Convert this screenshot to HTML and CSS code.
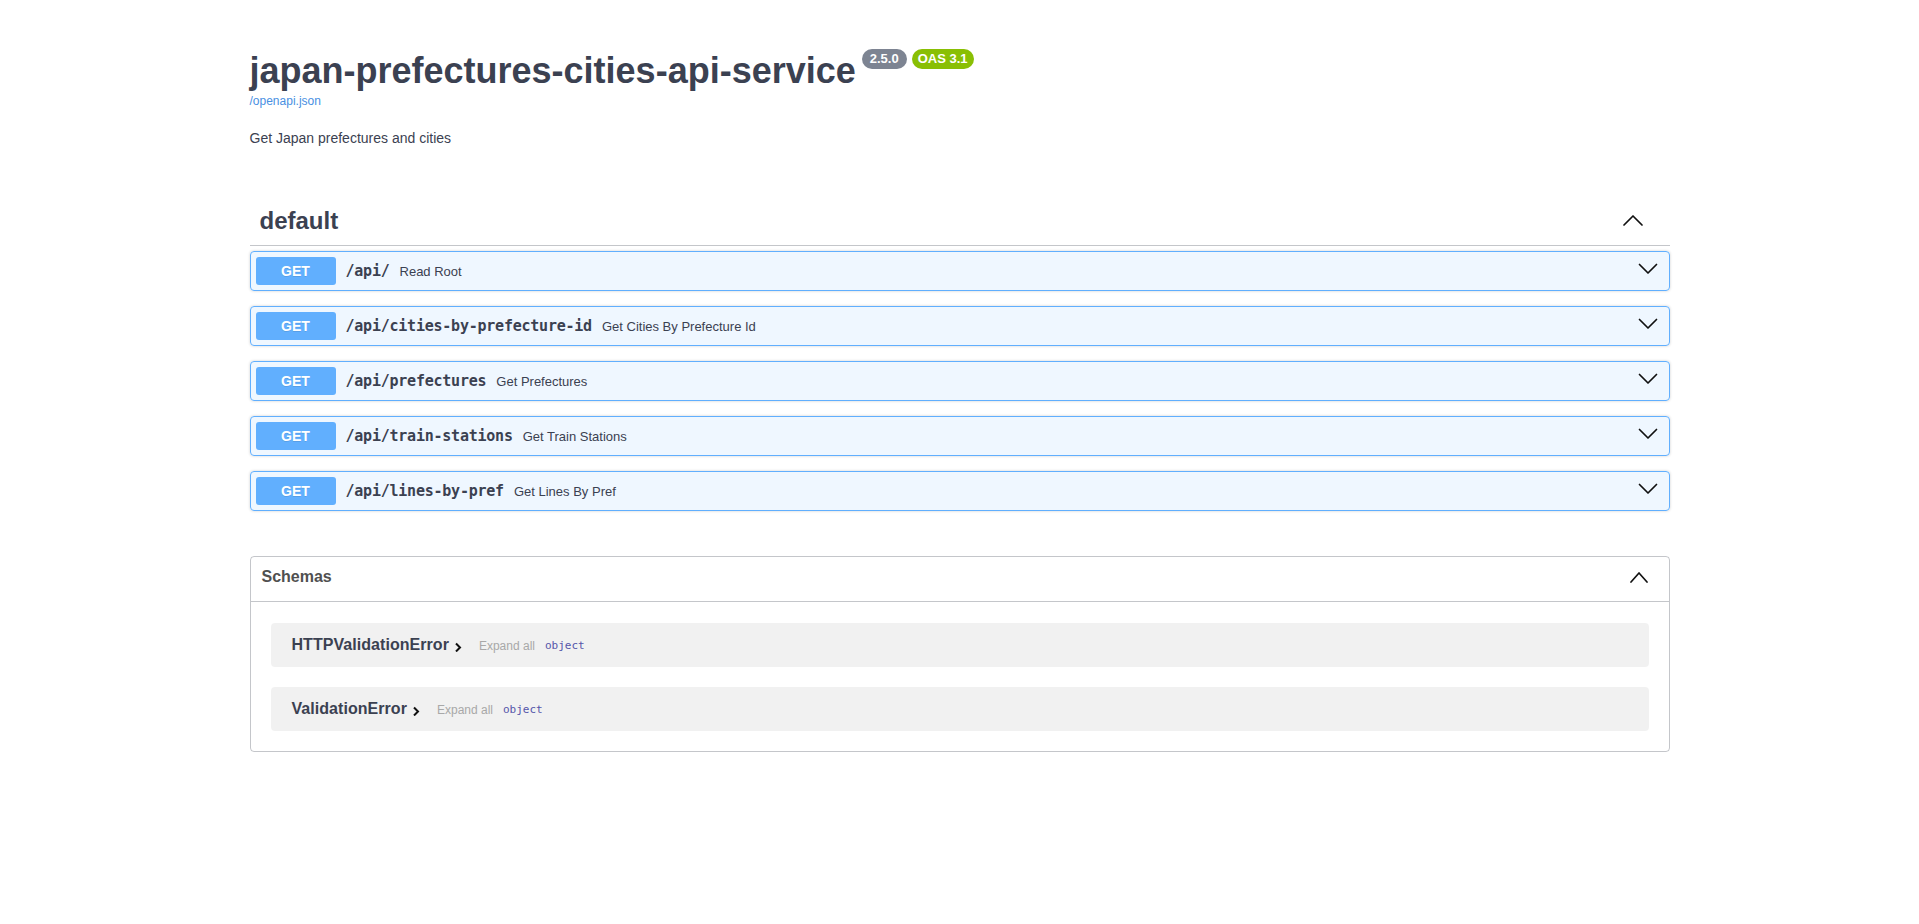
FILE: index.html
```html
<!DOCTYPE html>
<html lang="en">
<head>
<meta charset="utf-8">
<title>japan-prefectures-cities-api-service - Swagger UI</title>
<link rel="stylesheet" href="styles.css">
</head>
<body>
<div class="swagger-ui">
  <div class="wrapper">
    <div class="info">
      <hgroup class="main">
        <h2 class="title">japan-prefectures-cities-api-service<span class="badges"><small class="badge version">2.5.0</small><small class="badge oas">OAS 3.1</small></span></h2>
        <a class="spec-link" href="#">/openapi.json</a>
      </hgroup>
      <div class="description"><p>Get Japan prefectures and cities</p></div>
    </div>

    <section class="tag-section">
      <h3 class="opblock-tag">
        <span class="tag-name">default</span>
        <button class="tag-toggle" type="button" aria-label="Collapse operation">
          <svg class="chev" width="20" height="20" viewBox="0 0 20 20"><path d="M1 14 L10 5 L19 14" /></svg>
        </button>
      </h3>

      <div class="opblock">
        <div class="summary">
          <span class="method">GET</span>
          <span class="path">/api/</span>
          <span class="desc">Read Root</span>
          <button class="op-toggle" type="button" aria-label="Expand"><svg class="chev" width="20" height="20" viewBox="0 0 20 20"><path d="M1.5 3.5 L10 12 L18.5 3.5" /></svg></button>
        </div>
      </div>
      <div class="opblock">
        <div class="summary">
          <span class="method">GET</span>
          <span class="path">/api/cities-by-prefecture-id</span>
          <span class="desc">Get Cities By Prefecture Id</span>
          <button class="op-toggle" type="button" aria-label="Expand"><svg class="chev" width="20" height="20" viewBox="0 0 20 20"><path d="M1.5 3.5 L10 12 L18.5 3.5" /></svg></button>
        </div>
      </div>
      <div class="opblock">
        <div class="summary">
          <span class="method">GET</span>
          <span class="path">/api/prefectures</span>
          <span class="desc">Get Prefectures</span>
          <button class="op-toggle" type="button" aria-label="Expand"><svg class="chev" width="20" height="20" viewBox="0 0 20 20"><path d="M1.5 3.5 L10 12 L18.5 3.5" /></svg></button>
        </div>
      </div>
      <div class="opblock">
        <div class="summary">
          <span class="method">GET</span>
          <span class="path">/api/train-stations</span>
          <span class="desc">Get Train Stations</span>
          <button class="op-toggle" type="button" aria-label="Expand"><svg class="chev" width="20" height="20" viewBox="0 0 20 20"><path d="M1.5 3.5 L10 12 L18.5 3.5" /></svg></button>
        </div>
      </div>
      <div class="opblock">
        <div class="summary">
          <span class="method">GET</span>
          <span class="path">/api/lines-by-pref</span>
          <span class="desc">Get Lines By Pref</span>
          <button class="op-toggle" type="button" aria-label="Expand"><svg class="chev" width="20" height="20" viewBox="0 0 20 20"><path d="M1.5 3.5 L10 12 L18.5 3.5" /></svg></button>
        </div>
      </div>
    </section>

    <section class="models">
      <h4 class="models-head">
        <span class="models-title">Schemas</span>
        <button class="models-toggle" type="button" aria-label="Collapse schemas">
          <svg class="chev" width="20" height="20" viewBox="0 0 20 20"><path d="M2 13 L10 4 L18 13" /></svg>
        </button>
      </h4>
      <div class="models-body">
        <div class="model-container">
          <span class="model-title">HTTPValidationError</span><svg class="model-arrow" width="10" height="10" viewBox="0 0 10 10"><path d="M3 1.5 L7 5.5 L3 9.5" /></svg><span class="expand-all">Expand all</span><span class="prop-type">object</span>
        </div>
        <div class="model-container">
          <span class="model-title">ValidationError</span><svg class="model-arrow" width="10" height="10" viewBox="0 0 10 10"><path d="M3 1.5 L7 5.5 L3 9.5" /></svg><span class="expand-all">Expand all</span><span class="prop-type">object</span>
        </div>
      </div>
    </section>
  </div>
</div>
</body>
</html>
```

FILE: styles.css
```css
html, body {
  margin: 0;
  padding: 0;
  background: #fff;
}

body {
  font-family: "Liberation Sans", Arial, sans-serif;
  color: #3b4151;
}

.wrapper {
  max-width: 1460px;
  margin: 0 auto;
  padding: 0 20px;
  box-sizing: border-box;
}

/* ---------- info ---------- */
.info {
  margin: 50px 0 48px;
}

.info .main {
  margin: 0 0 20px;
}

.title {
  margin: 0;
  font-size: 36px;
  font-weight: bold;
  color: #3b4151;
}

.badges {
  display: inline-flex;
  gap: 5px;
  vertical-align: top;
  margin-left: 6px;
  margin-top: -1px;
}

.badge {
  display: inline-block;
  font-size: 13px;
  font-weight: bold;
  line-height: 15px;
  padding: 2px 8px 3px;
  border-radius: 57px;
  color: #fff;
}

.version {
  background: #7d8492;
}

.oas {
  background: #89bf04;
  padding: 2px 6px 3px;
}

.spec-link {
  display: block;
  margin-top: 2px;
  font-size: 12px;
  color: #4990e2;
  text-decoration: none;
}

.description p {
  margin: 12px 0 14px;
  font-size: 14px;
  line-height: 1.5;
  color: #3b4151;
}

/* ---------- operations ---------- */
.tag-section {
  display: flex;
  flex-direction: column;
}

.opblock-tag {
  display: flex;
  align-items: center;
  margin: 0 0 5px;
  padding: 10px 20px 10px 10px;
  border-bottom: 1px solid rgba(59, 65, 81, .3);
  font-size: 24px;
  font-weight: bold;
  color: #3b4151;
}

.tag-name {
  flex: 1;
}

button {
  background: none;
  border: 0;
  padding: 0;
  margin: 0;
  font: inherit;
  color: inherit;
  display: flex;
  align-items: center;
}

.chev path {
  fill: none;
  stroke: #111;
  stroke-width: 1.7;
  stroke-linecap: round;
  stroke-linejoin: round;
}

.tag-toggle {
  margin-right: 7px;
}

.opblock {
  margin: 0 0 15px;
  border: 1px solid #61affe;
  border-radius: 4px;
  background: rgba(97, 175, 254, .1);
  box-shadow: 0 0 3px rgba(0, 0, 0, .19);
}

.summary {
  display: flex;
  align-items: center;
  padding: 5px;
}

.method {
  min-width: 80px;
  padding: 6px 0;
  border-radius: 3px;
  background: #61affe;
  color: #fff;
  font-size: 14px;
  font-weight: bold;
  text-align: center;
  text-shadow: 0 1px 0 rgba(0, 0, 0, .1);
}

.path {
  padding: 0 10px;
  font-family: "DejaVu Sans Mono", "Liberation Mono", monospace;
  font-size: 15px;
  font-weight: bold;
  letter-spacing: -0.23px;
  color: #3b4151;
}

.desc {
  flex: 1;
  font-size: 13px;
  color: #3b4151;
}

.op-toggle {
  margin-right: 6px;
}

/* ---------- schemas ---------- */
.models {
  margin: 30px 0;
  border: 1px solid rgba(59, 65, 81, .3);
  border-radius: 4px;
}

.models-head {
  display: flex;
  align-items: center;
  margin: 0;
  padding: 10px 20px 10px 10px;
  height: 24px;
  border-bottom: 1px solid rgba(59, 65, 81, .3);
  font-size: 16px;
  font-weight: bold;
  color: #505050;
}

.models-title {
  flex: 1;
  padding-left: 1px;
  padding-bottom: 5px;
}

.models-body {
  padding: 21px 0 20px;
  display: flex;
  flex-direction: column;
  gap: 20px;
}

.model-container {
  margin: 0 20px;
  padding: 12px 21px;
  height: 20px;
  border-radius: 4px;
  background: rgba(0, 0, 0, .055);
  display: flex;
  align-items: center;
  line-height: 20px;
}

.model-title {
  font-size: 16px;
  font-weight: bold;
  letter-spacing: 0.05px;
  color: #3b4151;
}

.model-arrow {
  margin-left: 4px;
  transform: translateY(2px);
}

.model-arrow path {
  fill: none;
  stroke: #111;
  stroke-width: 2;
  stroke-linejoin: miter;
}

.expand-all {
  margin-left: 16px;
  font-size: 12px;
  color: #a8a8a8;
  transform: translateY(1px);
}

.prop-type {
  margin-left: 10px;
  font-family: "DejaVu Sans Mono", "Liberation Mono", monospace;
  font-size: 11px;
  color: #55a;
  transform: translateY(1px);
}
```
